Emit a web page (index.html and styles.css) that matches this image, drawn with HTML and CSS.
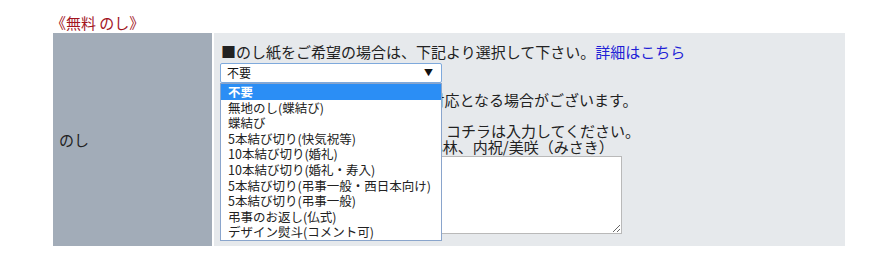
FILE: index.html
```html
<!DOCTYPE html>
<html lang="ja">
<head>
  <meta charset="UTF-8" />
  <title>のし</title>
  <link rel="stylesheet" href="styles.css">
</head>
<body>

  <h3 class="section-title">《無料 のし》</h3>

  <div class="form-row">
    <div class="form-label">のし</div>
    <div class="form-field">
      <p class="lead">■のし紙をご希望の場合は、下記より選択して下さい。<a href="#" class="link">詳細はこちら</a></p>

      <!-- select with its list opened -->
      <div class="select-wrap">
        <div class="select-box">
          <span>不要</span>
          <span class="select-arrow">▼</span>
        </div>
        <ul class="select-list">
          <li class="selected">不要</li>
          <li>無地のし(蝶結び)</li>
          <li>蝶結び</li>
          <li>5本結び切り(快気祝等)</li>
          <li>10本結び切り(婚礼)</li>
          <li>10本結び切り(婚礼・寿入)</li>
          <li>5本結び切り(弔事一般・西日本向け)</li>
          <li>5本結び切り(弔事一般)</li>
          <li>弔事のお返し(仏式)</li>
          <li>デザイン熨斗(コメント可)</li>
        </ul>
      </div>

      <p class="note">※ご注文内容によっては、別途対応となる場合がございます。</p>
      <p class="note note-gap">※お名入れをご希望の場合のみ、コチラは入力してください。</p>
      <p class="note">例）御祝/山田太郎、寿/鈴木、小林、内祝/美咲（みさき）</p>
      <textarea class="name-input"></textarea>
    </div>
  </div>

</body>
</html>
```

FILE: styles.css
```css
* {
  box-sizing: border-box;
  margin: 0;
  padding: 0;
}

body {
  font-family: "Noto Sans CJK JP", "Noto Sans", sans-serif;
  background: #fff;
  color: #222;
  padding: 12px 0 0 51px;
}

.section-title {
  font-size: 15px;
  font-weight: normal;
  line-height: 21px;
  color: #a2141e;
}

.form-row {
  display: flex;
  gap: 2px;
  width: 792px;
  margin-left: 2px;
}

.form-label {
  width: 159px;
  background: #a2acb8;
  display: flex;
  align-items: center;
  padding-left: 6px;
  font-size: 15px;
}

.form-field {
  flex: 1;
  background: #e6e9ec;
  padding: 11px 0 12px 7px;
  font-size: 15px;
  line-height: 16px;
}

.link {
  color: #1f1fd6;
  text-decoration: none;
}

.select-wrap {
  position: relative;
  width: 222px;
  margin: 3px 0 0 -1px;
}

.select-box {
  height: 20px;
  background: #fff;
  border: 1px solid #7ea9dc;
  border-radius: 2px;
  display: flex;
  align-items: center;
  justify-content: space-between;
  padding: 0 8px 0 6px;
  font-size: 12px;
  color: #111;
}

.select-arrow {
  font-size: 9px;
}

.select-list {
  position: absolute;
  top: 20px;
  left: 0;
  width: 222px;
  list-style: none;
  background: #fff;
  border: 1px solid #8aa5cc;
  z-index: 10;
}

.select-list li {
  height: 15.6px;
  line-height: 15.6px;
  padding-left: 7px;
  font-size: 12.5px;
  color: #222;
  white-space: nowrap;
}

.select-list li.selected {
  background: #2b8ef5;
  color: #fff;
  font-weight: bold;
}

.note {
  margin-top: 9px;
}

.note-gap {
  margin-top: 15px;
}

.note-gap + .note {
  margin-top: 0;
}

.name-input {
  display: block;
  width: 401px;
  height: 78px;
  margin-top: 1px;
  border: 1px solid #b9b9b9;
  background: #fff;
}
```
